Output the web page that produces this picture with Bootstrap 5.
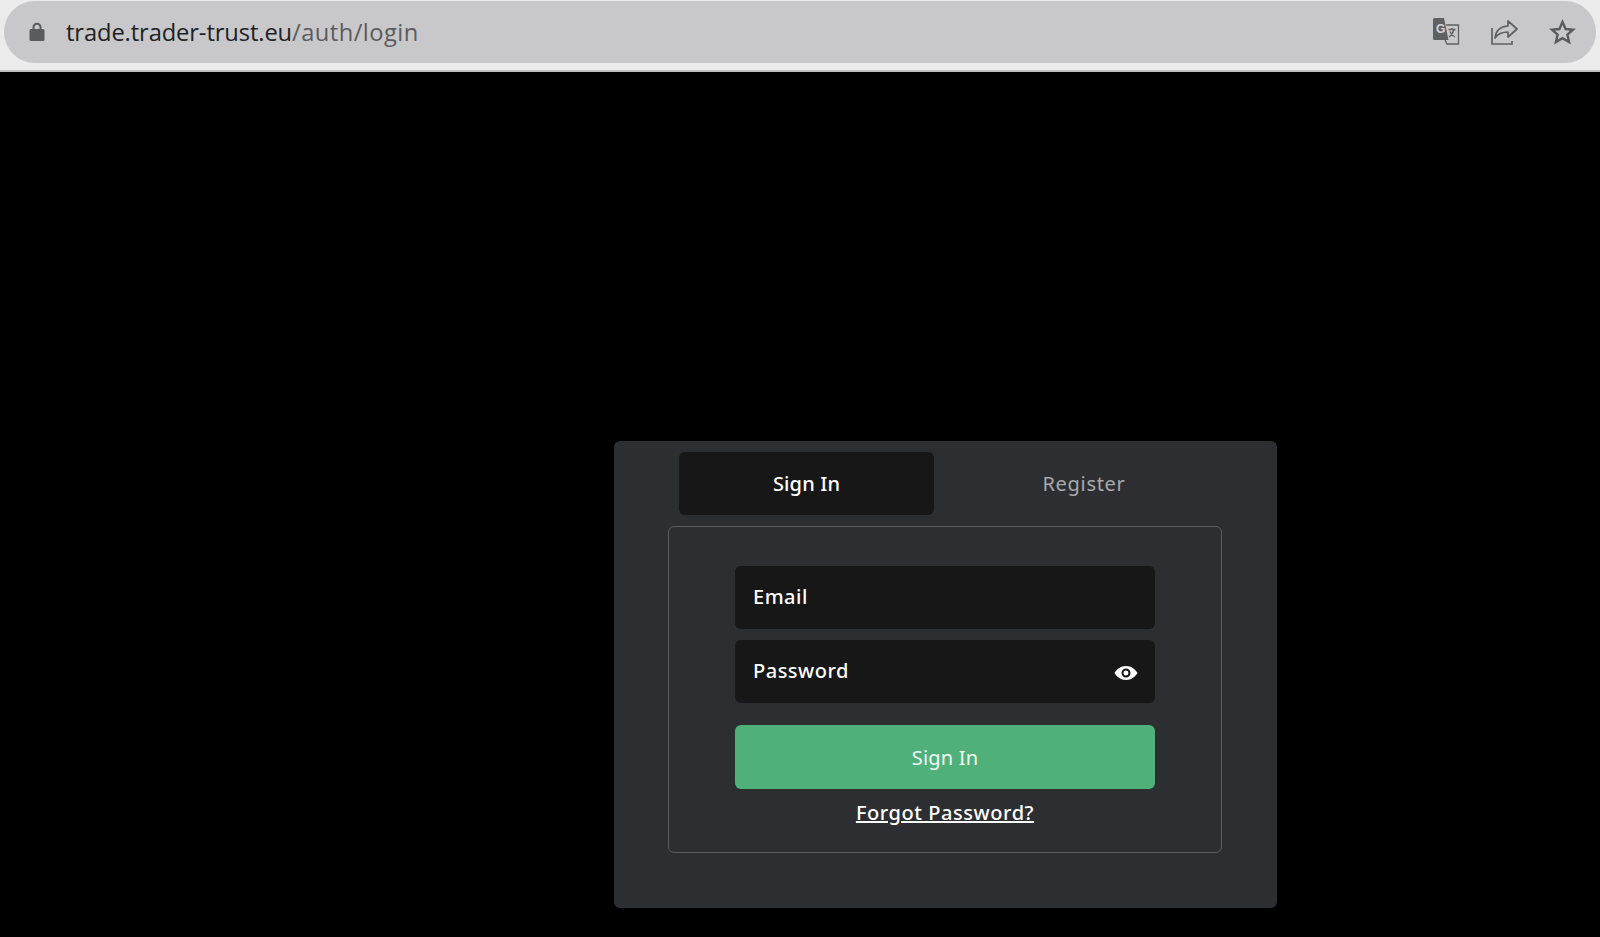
<!DOCTYPE html>
<html lang="en">
<head>
<meta charset="utf-8">
<title>Login</title>
<link href="https://cdn.jsdelivr.net/npm/bootstrap@5.3.0/dist/css/bootstrap.min.css" rel="stylesheet">
<style>
html,body{height:100%;}
body{background:#000;font-family:"Noto Sans","Liberation Sans",sans-serif;overflow:hidden;}
.chrome-bar{height:72px;background:#ebebeb;border-bottom:2px solid #bdbdbd;padding:1px 4px 0;}
.url-pill{height:62px;background:#c8c8ca;border-radius:31px;padding:0 20px 0 25px;}
.url-text{font-family:"Open Sans","Liberation Sans",sans-serif;font-size:23.7px;line-height:1;color:#202124;letter-spacing:-.1px;margin-left:21px;padding-top:2px;}
.url-text span{color:#5a5b5e;letter-spacing:.45px;}
.chrome-icons{gap:31px;}
.page-wrap{padding:369px 0 0 614px;}
.auth-box{width:663px;height:467px;background:#2d2e32;border-radius:6px;padding:11px 55px 0 54px;}
.tab-row{padding-left:11px;height:63px;}
.auth-tab{flex:none;font-size:20px;font-weight:500;letter-spacing:.35px;height:63px;border:0;background:transparent;color:#a8a9ab;border-radius:6px;padding:0;}
.auth-tab.is-on{background:#171718;color:#fff;width:255px;letter-spacing:.15px;}
.auth-tab.is-off{width:300px;font-weight:400;letter-spacing:.7px;}
.auth-panel{margin-top:11px;height:327px;border:1px solid #5c5d61;border-radius:6px;padding:39px 66px 0;}
.auth-input{height:63px;background:#171718;border:0;border-radius:6px;color:#fff;font-size:20px;font-weight:500;letter-spacing:.5px;padding:0 18px 2px;}
.auth-input::placeholder{color:#fff;opacity:1;}
.auth-input:focus{background:#171718;color:#fff;box-shadow:none;}
.pw-wrap{margin-top:11px;}
.eye-ico{right:17px;top:24px;}
.auth-submit{height:64px;background:#50b07a;border:0;border-radius:6px;color:#f2fbf6;font-size:20px;font-weight:400;letter-spacing:.2px;margin-top:22px;padding-top:8px;}
.auth-forgot{font-size:20px;font-weight:500;letter-spacing:.55px;color:#fff;margin-top:10px;line-height:28px;}
</style>
</head>
<body>
<div class="chrome-bar">
  <div class="url-pill d-flex align-items-center">
    <svg width="16" height="20" viewBox="0 0 16 20"><path fill="#5a5b5e" d="M3.500 7V5.200a4.500 4.500 0 0 1 9 0V7H14a1.500 1.500 0 0 1 1.500 1.500v9A1.500 1.500 0 0 1 14 19H2a1.500 1.500 0 0 1-1.500-1.500v-9A1.500 1.500 0 0 1 2 7zm2 0h5V5.200a2.500 2.500 0 0 0-5 0z"/></svg>
    <div class="url-text">trade.trader-trust.eu<span>/auth/login</span></div>
    <div class="chrome-icons ms-auto d-flex align-items-center">
      <svg width="28" height="28" viewBox="0 0 28 28">
        <path fill="none" stroke="#5f6063" stroke-width="1.300" d="M14 7h12.500v19H15l-2-4"/>
        <path fill="#5f6063" d="M1 1.500a1.500 1.500 0 0 1 1.500-1.500H12l4.500 22H2.500A1.500 1.500 0 0 1 1 20.500z"/>
        <text x="4" y="15" font-family="Liberation Sans,sans-serif" font-size="12" font-weight="700" fill="#d5d5d7">G</text>
        <path fill="none" stroke="#5f6063" stroke-width="1.300" d="M16.500 11.500h7M20 10v1.500M22 11.500c-.8 3.500-3 6-5 7.500M18 13.500c1 2.500 3 4.500 5 5.500"/>
      </svg>
      <svg width="27" height="27" viewBox="0 0 27 27">
        <path fill="none" stroke="#5f6063" stroke-width="1.700" d="M1 9v16h20v-3"/>
        <path fill="none" stroke="#5f6063" stroke-width="1.700" stroke-linejoin="round" d="M17 2l9 8-9 8v-5c-6 0-10 1.500-13 6 .8-7 5-11.500 13-12z"/>
      </svg>
      <svg width="27" height="27" viewBox="0 0 27 27">
        <path fill="none" stroke="#5a5b5e" stroke-width="2.400" stroke-linejoin="miter" d="M13.500 3l3.100 7 7.400.7-5.600 5 1.700 7.300-6.600-3.900L6.900 23l1.700-7.300-5.600-5 7.400-.7z"/>
      </svg>
    </div>
  </div>
</div>
<main class="page-wrap">
  <div class="auth-box">
    <div class="tab-row d-flex">
      <button type="button" class="auth-tab is-on">Sign In</button>
      <button type="button" class="auth-tab is-off">Register</button>
    </div>
    <div class="auth-panel d-flex flex-column">
      <input class="form-control auth-input" type="email" placeholder="Email">
      <div class="position-relative pw-wrap">
        <input class="form-control auth-input" type="password" placeholder="Password">
        <svg class="eye-ico position-absolute" width="24" height="18" viewBox="0 0 24 18"><path fill="#fff" fill-rule="evenodd" d="M12 2C6.500 2 2.500 5.500.5 9c2 3.500 6 7 11.500 7s9.500-3.500 11.500-7c-2-3.500-6-7-11.500-7zm0 2.500a4.500 4.500 0 1 1 0 9 4.500 4.500 0 0 1 0-9zm0 2a2.500 2.500 0 1 0 0 5 2.500 2.500 0 0 0 0-5z"/></svg>
      </div>
      <button type="button" class="btn auth-submit w-100">Sign In</button>
      <a href="#" class="auth-forgot text-center">Forgot Password?</a>
    </div>
  </div>
</main>
</body>
</html>
